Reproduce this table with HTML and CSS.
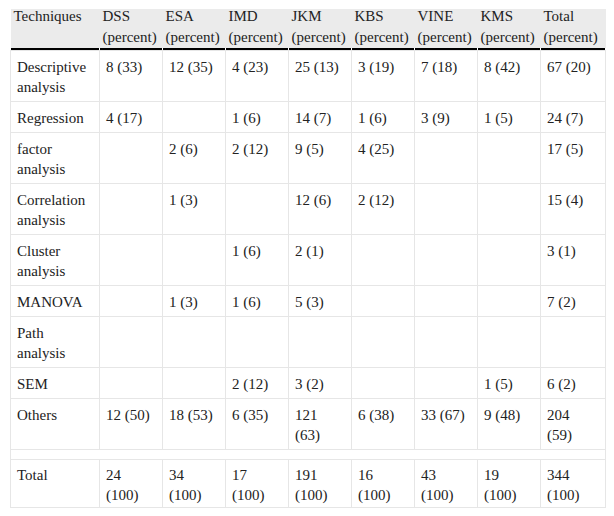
FILE: index.html
```html
<!DOCTYPE html>
<html>
<head>
<meta charset="utf-8">
<link rel="stylesheet" href="styles.css">
</head>
<body>
<table class="data">
  <colgroup>
    <col class="c-first">
    <col class="c-num"><col class="c-num"><col class="c-num"><col class="c-num">
    <col class="c-num"><col class="c-num"><col class="c-num"><col class="c-last">
  </colgroup>
  <thead>
    <tr>
      <th><span class="hd">Techniques</span></th>
      <th><span class="hd">DSS (percent)</span></th>
      <th><span class="hd">ESA (percent)</span></th>
      <th><span class="hd">IMD (percent)</span></th>
      <th><span class="hd">JKM (percent)</span></th>
      <th><span class="hd">KBS (percent)</span></th>
      <th><span class="hd">VINE (percent)</span></th>
      <th><span class="hd">KMS (percent)</span></th>
      <th><span class="hd">Total (percent)</span></th>
    </tr>
  </thead>
  <tbody>
    <tr><td>Descriptive analysis</td><td>8 (33)</td><td>12 (35)</td><td>4 (23)</td><td>25 (13)</td><td>3 (19)</td><td>7 (18)</td><td>8 (42)</td><td>67 (20)</td></tr>
    <tr><td>Regression</td><td>4 (17)</td><td></td><td>1 (6)</td><td>14 (7)</td><td>1 (6)</td><td>3 (9)</td><td>1 (5)</td><td>24 (7)</td></tr>
    <tr><td>factor analysis</td><td></td><td>2 (6)</td><td>2 (12)</td><td>9 (5)</td><td>4 (25)</td><td></td><td></td><td>17 (5)</td></tr>
    <tr><td>Correlation analysis</td><td></td><td>1 (3)</td><td></td><td>12 (6)</td><td>2 (12)</td><td></td><td></td><td>15 (4)</td></tr>
    <tr><td>Cluster analysis</td><td></td><td></td><td>1 (6)</td><td>2 (1)</td><td></td><td></td><td></td><td>3 (1)</td></tr>
    <tr><td>MANOVA</td><td></td><td>1 (3)</td><td>1 (6)</td><td>5 (3)</td><td></td><td></td><td></td><td>7 (2)</td></tr>
    <tr><td>Path analysis</td><td></td><td></td><td></td><td></td><td></td><td></td><td></td><td></td></tr>
    <tr><td>SEM</td><td></td><td></td><td>2 (12)</td><td>3 (2)</td><td></td><td></td><td>1 (5)</td><td>6 (2)</td></tr>
    <tr><td>Others</td><td>12 (50)</td><td>18 (53)</td><td>6 (35)</td><td>121 (63)</td><td>6 (38)</td><td>33 (67)</td><td>9 (48)</td><td>204 (59)</td></tr>
    <tr class="spacer"><td colspan="9"></td></tr>
    <tr class="total"><td>Total</td><td>24 (100)</td><td>34 (100)</td><td>17 (100)</td><td>191 (100)</td><td>16 (100)</td><td>43 (100)</td><td>19 (100)</td><td>344 (100)</td></tr>
  </tbody>
</table>
</body>
</html>
```
FILE: styles.css
```css
html, body {
  margin: 0;
  background: #fff;
}
body {
  padding: 9px 10px 0 10px;
  font-family: "Liberation Serif", "Times New Roman", serif;
  font-size: 15px;
  color: #222;
}
.data {
  width: 595px;
  table-layout: fixed;
  border-collapse: collapse;
  font-family: "Liberation Serif", "Times New Roman", serif;
  font-size: 15px;
}
.c-first { width: 89px; }
.c-num { width: 63px; }
.c-last { width: 65px; }

.data th {
  font-family: "Liberation Serif", "Times New Roman", serif;
  font-weight: normal;
  text-align: left;
  vertical-align: top;
  line-height: 21px;
  padding: 0 2px 2px 3px;
  height: 41px;
  box-sizing: border-box;
  background:
    linear-gradient(#000, #000) left bottom / calc(100% - 1px) 2px no-repeat,
    linear-gradient(#ebebeb, #ebebeb) left top / 100% calc(100% - 2px) no-repeat;
}
.data th .hd {
  display: block;
  margin-top: -3px;
}
.data td {
  font-family: "Liberation Serif", "Times New Roman", serif;
  vertical-align: top;
  line-height: 20px;
  padding: 6px 9px 4px 6px;
  border: 1px solid #e6e6e6;
}
.data tr.spacer td {
  height: 9px;
  padding: 0;
}
.data tr.total td {
  padding-top: 5px;
  padding-bottom: 2px;
}
```
